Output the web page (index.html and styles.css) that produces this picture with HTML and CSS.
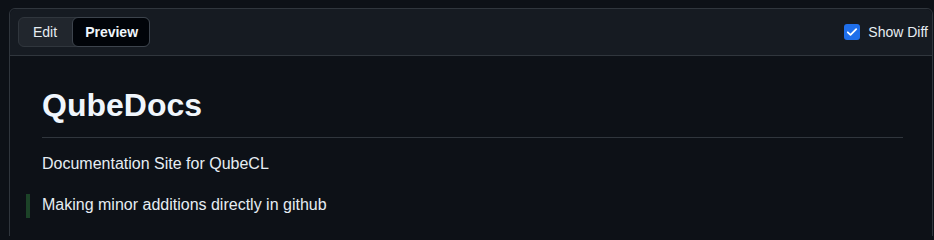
FILE: index.html
```html
<!DOCTYPE html>
<html lang="en">
<head>
<meta charset="utf-8">
<title>QubeDocs Preview</title>
<link rel="stylesheet" href="styles.css">
</head>
<body>
<div class="page">
  <div class="editor">
    <div class="toolbar">
      <div class="tabs">
        <button class="tab">Edit</button>
        <button class="tab tab-active">Preview</button>
      </div>
      <label class="diff-toggle">
        <span class="checkbox">
          <svg width="16" height="16" viewBox="0 0 16 16" aria-hidden="true"><path d="M3.8 8.3l2.7 2.6 5.7-5.7" fill="none" stroke="#ffffff" stroke-width="1.8" stroke-linecap="round" stroke-linejoin="round"/></svg>
        </span>
        <span class="diff-label">Show Diff</span>
      </label>
    </div>
    <div class="preview">
      <h1 class="title">QubeDocs</h1>
      <p class="para">Documentation Site for QubeCL</p>
      <p class="para para-added">Making minor additions directly in github</p>
    </div>
  </div>
</div>
</body>
</html>
```

FILE: styles.css
```css
* { box-sizing: border-box; }

html, body {
  margin: 0;
  background: #0d1117;
  font-family: "Liberation Sans", Arial, sans-serif;
  color: #e6edf3;
}

body {
  height: 236px;
  overflow: hidden;
}

.page {
  padding: 8px 1px 0 9px;
}

.editor {
  border: 1px solid #30363d;
  border-radius: 6px;
  background: #0d1117;
  min-height: 240px;
}

.toolbar {
  display: flex;
  align-items: center;
  justify-content: space-between;
  padding: 8px 4px 8px 8px;
  background: #161b22;
  border-bottom: 1px solid #30363d;
  border-radius: 6px 6px 0 0;
}

.tabs {
  display: flex;
  height: 30px;
  border: 1px solid #30363d;
  border-radius: 6px;
  background: #21262d;
}

.tab {
  font-family: inherit;
  font-size: 14px;
  line-height: 28px;
  color: #e6edf3;
  background: transparent;
  border: 0;
  padding: 0 15px 0 14px;
  margin: 0;
  cursor: pointer;
}

.tab-active {
  background: #010409;
  border: 1px solid #3d444d;
  border-radius: 6px;
  margin: -1px -1px -1px 0;
  padding: 0 11px 0 12px;
  font-weight: 700;
  color: #f0f6fc;
}

.diff-toggle {
  display: flex;
  align-items: center;
  gap: 8px;
  font-size: 14px;
  color: #e6edf3;
}

.checkbox {
  display: block;
  width: 16px;
  height: 16px;
  border-radius: 3px;
  background: #1f6feb;
}

.checkbox svg { display: block; }

.preview {
  padding: 29px 29px 0 32px;
}

.title {
  margin: 0 0 14px;
  padding-bottom: 12px;
  border-bottom: 1px solid #30363d;
  font-size: 32px;
  line-height: 40px;
  font-weight: 700;
  color: #f0f6fc;
}

.para {
  margin: 0 0 17px;
  font-size: 16px;
  line-height: 24px;
}

.para-added {
  position: relative;
}

.para-added::before {
  content: "";
  position: absolute;
  left: -16px;
  top: 1px;
  width: 4px;
  height: 24px;
  background: #1c4328;
}
```
